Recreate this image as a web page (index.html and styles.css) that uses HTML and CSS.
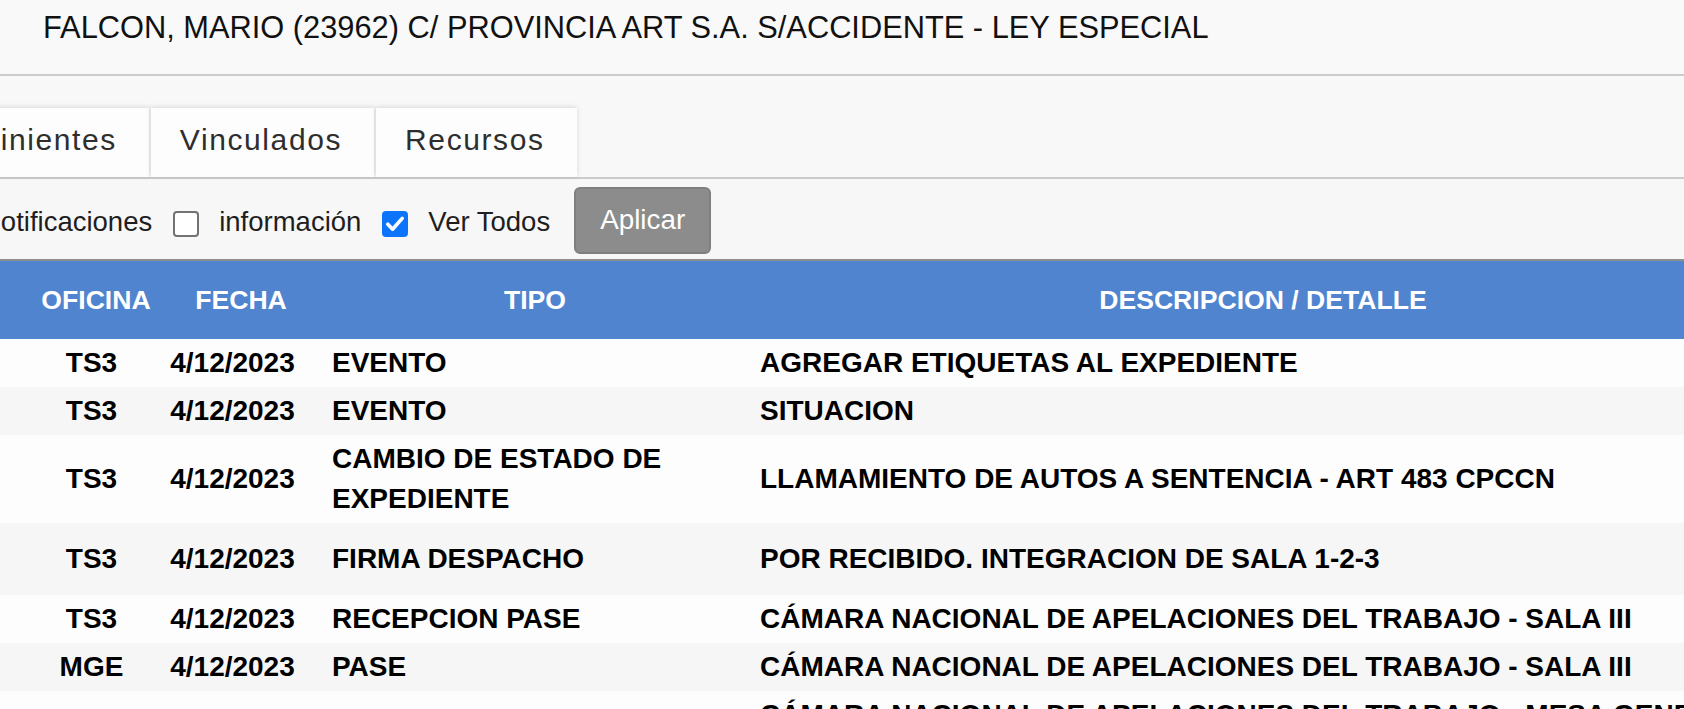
FILE: index.html
```html
<!DOCTYPE html>
<html lang="es">
<head>
<meta charset="utf-8">
<title>Expediente</title>
<link rel="stylesheet" href="styles.css">
</head>
<body>
<div class="app">
  <header class="title-bar">
    <h1 class="title">FALCON, MARIO (23962) C/ PROVINCIA ART S.A. S/ACCIDENTE - LEY ESPECIAL</h1>
  </header>

  <nav class="tabs">
    <div class="tab-list">
      <a class="tab">Intervinientes</a>
      <a class="tab">Vinculados</a>
      <a class="tab">Recursos</a>
    </div>
  </nav>

  <div class="filters">
    <label class="filter"><span class="check"></span><span class="filter-text">Notificaciones</span></label>
    <label class="filter"><span class="check"></span><span class="filter-text">información</span></label>
    <label class="filter"><span class="check is-checked"><svg viewBox="0 0 26 26" width="26" height="26"><path d="M5.8 13.2 L10.6 18.2 L20.2 7.4" fill="none" stroke="#fff" stroke-width="3.6" stroke-linecap="round" stroke-linejoin="round"/></svg></span><span class="filter-text">Ver Todos</span></label>
    <button class="apply" type="button">Aplicar</button>
  </div>

  <div class="grid">
    <div class="grid-head">
      <div class="hcell">OFICINA</div>
      <div class="hcell">FECHA</div>
      <div class="hcell">TIPO</div>
      <div class="hcell">DESCRIPCION / DETALLE</div>
    </div>

    <div class="grid-row">
      <div class="cell c-ofi">TS3</div>
      <div class="cell c-fecha">4/12/2023</div>
      <div class="cell c-tipo">EVENTO</div>
      <div class="cell c-desc">AGREGAR ETIQUETAS AL EXPEDIENTE</div>
    </div>
    <div class="grid-row">
      <div class="cell c-ofi">TS3</div>
      <div class="cell c-fecha">4/12/2023</div>
      <div class="cell c-tipo">EVENTO</div>
      <div class="cell c-desc">SITUACION</div>
    </div>
    <div class="grid-row">
      <div class="cell c-ofi">TS3</div>
      <div class="cell c-fecha">4/12/2023</div>
      <div class="cell c-tipo">CAMBIO DE ESTADO DE EXPEDIENTE</div>
      <div class="cell c-desc">LLAMAMIENTO DE AUTOS A SENTENCIA - ART 483 CPCCN</div>
    </div>
    <div class="grid-row row-tall">
      <div class="cell c-ofi">TS3</div>
      <div class="cell c-fecha">4/12/2023</div>
      <div class="cell c-tipo">FIRMA DESPACHO</div>
      <div class="cell c-desc">POR RECIBIDO. INTEGRACION DE SALA 1-2-3</div>
    </div>
    <div class="grid-row">
      <div class="cell c-ofi">TS3</div>
      <div class="cell c-fecha">4/12/2023</div>
      <div class="cell c-tipo">RECEPCION PASE</div>
      <div class="cell c-desc">CÁMARA NACIONAL DE APELACIONES DEL TRABAJO - SALA III</div>
    </div>
    <div class="grid-row">
      <div class="cell c-ofi">MGE</div>
      <div class="cell c-fecha">4/12/2023</div>
      <div class="cell c-tipo">PASE</div>
      <div class="cell c-desc">CÁMARA NACIONAL DE APELACIONES DEL TRABAJO - SALA III</div>
    </div>
    <div class="grid-row">
      <div class="cell c-ofi">MGE</div>
      <div class="cell c-fecha">4/12/2023</div>
      <div class="cell c-tipo">RECEPCION PASE</div>
      <div class="cell c-desc">CÁMARA NACIONAL DE APELACIONES DEL TRABAJO - MESA GENERAL DE ENTRADAS</div>
    </div>
  </div>
</div>
</body>
</html>
```

FILE: styles.css
```css
html, body {
  margin: 0;
  padding: 0;
}
body {
  background: #f9f9f9;
  font-family: "Liberation Sans", Arial, sans-serif;
  color: #111;
  overflow: hidden;
  width: 1684px;
  height: 709px;
}
.app {
  width: 1684px;
  overflow: hidden;
}

/* title */
.title-bar {
  height: 74px;
  border-bottom: 2px solid #cbcbcb;
  box-sizing: content-box;
}
.title {
  margin: 0;
  padding: 11px 0 0 43px;
  font-size: 30.8px;
  line-height: 34px;
  font-weight: normal;
  color: #111;
  white-space: nowrap;
}

/* tabs */
.tabs {
  padding-top: 32px;
  border-bottom: 2px solid #cbcbcb;
  background: #f8f8f8;
}
.tab-list {
  display: flex;
  gap: 2px;
  margin-left: -113px;
}
.tab {
  display: block;
  padding: 15px 32px 20px 29px;
  font-size: 30px;
  line-height: 34px;
  letter-spacing: 1.6px;
  color: #2e2e2e;
  background: #fdfdfd;
  box-shadow: 0 -1px 5px rgba(0, 0, 0, 0.13);
  white-space: nowrap;
}

/* filters */
.filters {
  height: 80px;
  display: flex;
  align-items: center;
  gap: 21px;
  margin-left: -65px;
  background: #f7f7f7;
}
.filter {
  display: flex;
  align-items: center;
  gap: 20px;
  font-size: 27.5px;
  line-height: 31px;
  color: #1e1e1e;
  white-space: nowrap;
}
.filter-text {
  display: block;
  margin-top: 4px;
}
.check {
  display: block;
  width: 22px;
  height: 22px;
  margin-top: 9px;
  border: 2px solid #727272;
  border-radius: 4px;
  background: #fff;
}
.check svg {
  display: block;
  margin: -2px;
}
.check.is-checked {
  background: #0b74fb;
  border-color: #0b74fb;
}
.apply {
  height: 67px;
  padding: 0 24px;
  margin-top: 2px;
  margin-left: 3px;
  font-family: "Liberation Sans", Arial, sans-serif;
  font-size: 27.8px;
  color: #fff;
  background: #8c8c8c;
  border: 2px solid #7f7f7f;
  border-radius: 6px;
}

/* grid */
.grid-head {
  display: grid;
  grid-template-columns: 192px 98px 490px 966px;
  height: 78px;
  align-items: center;
  border-top: 2px solid #8f8f8f;
  background: #5184cf;
  color: #fff;
  font-weight: bold;
  font-size: 26.6px;
}
.hcell {
  text-align: center;
  white-space: nowrap;
}
.grid-row {
  display: grid;
  grid-template-columns: 165px 135px 452px 1000px;
  align-items: center;
  font-weight: bold;
  font-size: 28px;
  line-height: 40px;
  color: #000;
  background: #fdfdfd;
}
.grid-row:nth-child(odd) {
  background: #f6f6f6;
}
.row-tall {
  min-height: 72px;
}
.cell {
  padding: 4px 0;
}
.c-ofi {
  padding-left: 18px;
  text-align: center;
}
.c-fecha {
  text-align: center;
  white-space: nowrap;
}
.c-tipo {
  padding-left: 32px;
  padding-right: 8px;
}
.c-desc {
  padding-left: 8px;
}
```
